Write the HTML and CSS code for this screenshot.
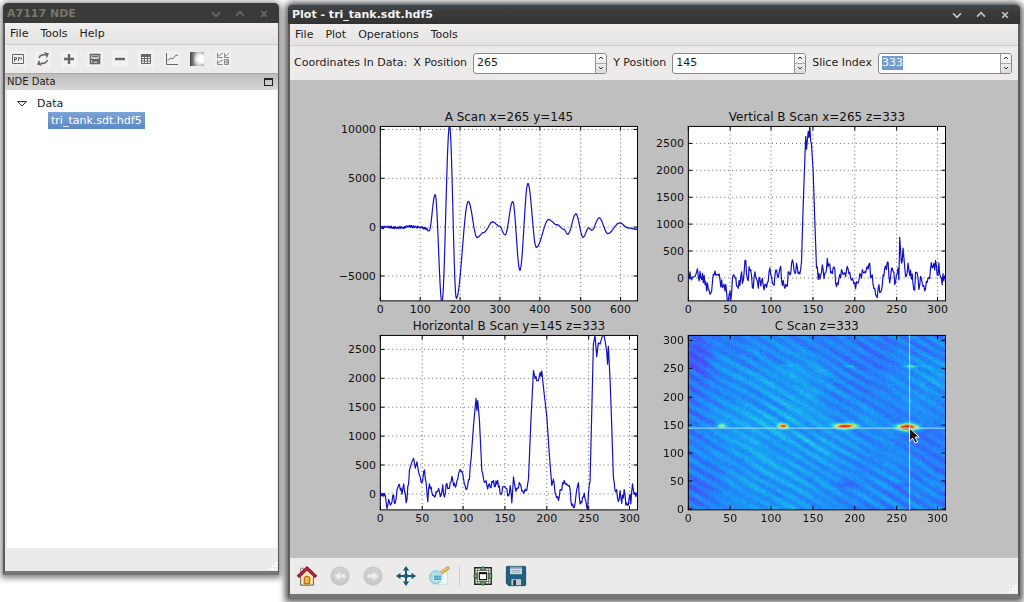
FILE: index.html
```html
<!DOCTYPE html>
<html lang="en">
<head>
<meta charset="utf-8">
<title>A7117 NDE</title>
<link rel="stylesheet" href="styles.css">
</head>
<body>
<main class="desktop">
  <section class="window window-data" aria-label="A7117 NDE">
    <header class="titlebar titlebar-idle">
      <h1 class="title">A7117 NDE</h1>
      <div class="window-buttons">
        <button class="window-button" aria-label="Minimize"><svg viewBox="0 0 9 9"><path d="M1 3l3.5 3.5L8 3"/></svg></button>
        <button class="window-button" aria-label="Maximize"><svg viewBox="0 0 9 9"><path d="M1 6l3.500-3.500L8 6"/></svg></button>
        <button class="window-button" aria-label="Close"><svg viewBox="0 0 9 9"><path d="M2 2l5 5M7 2l-5 5"/></svg></button>
      </div>
    </header>
    <nav class="menubar">
      <button class="menu">File</button>
      <button class="menu">Tools</button>
      <button class="menu">Help</button>
    </nav>
    <div class="data-tools" role="toolbar" aria-label="Data tools">
      <button class="tool" aria-label="Preview"><svg class="small-icon" viewBox="0 0 16 16"><path d="M2.500 3.500h11v9h-11zM4.500 10.500v-4h2v2h-2M8.500 10v-3.500h1.500v2M11.500 6.500v2"/></svg></button>
      <button class="tool" aria-label="Refresh"><svg class="small-icon icon-bold" viewBox="0 0 16 16"><path d="M4 7c1-3 4-4 6.500-3M12.500 9c-1 3-4 4-6.500 3"/><path class="solid" d="M9 1l5 1.500-2 4.500zM7 15l-5-1.500 2-4.500z"/></svg></button>
      <button class="tool" aria-label="Add"><svg class="small-icon icon-heavy" viewBox="0 0 16 16"><path d="M8 3v10M3 8h10"/></svg></button>
      <button class="tool" aria-label="Save"><svg class="small-icon icon-bold" viewBox="0 0 16 16"><path d="M3.500 3.500h9v9h-9zM4 8.500h8M5 5.500h6M6 12v-2h5v2"/></svg></button>
      <button class="tool" aria-label="Remove"><svg class="small-icon icon-heavy" viewBox="0 0 16 16"><path d="M3 8h10"/></svg></button>
      <button class="tool" aria-label="Table"><svg class="small-icon" viewBox="0 0 16 16"><path d="M3.500 4v8.500h9V4M3.500 7.500h9M3.500 10h9M6.500 5v7.500M9.500 5v7.500"/><path class="solid" d="M3 3h10v3H3z"/></svg></button>
      <button class="tool" aria-label="Line plot"><svg class="small-icon" viewBox="0 0 16 16"><path d="M2.500 2v11.500H14M3.500 10l3-3 2 1 3-3.500 2.500-.5"/></svg></button>
      <button class="tool" aria-label="Image plot"><span class="image-icon"></span></button>
      <button class="tool" aria-label="Multiple plots"><svg class="small-icon icon-light" viewBox="0 0 16 16"><path d="M2.500 2v4.500h5M9.500 2v4.500h4.500M2.500 9v4.500h5M3 5l2-1 3-2M10 5l2-1 2-2M3 12l2-1.500L8 9M9.500 8.500h4v5h-4zM10 11h3M12 9v4"/></svg></button>
    </div>
    <div class="dock-header">
      <h2 class="dock-title">NDE Data</h2>
      <button class="float-button" aria-label="Float panel"></button>
    </div>
    <ul class="tree">
      <li>
        <button class="tree-branch"><svg class="expander" viewBox="0 0 12 8"><path d="M1.500 1.500h9L6 6z"/></svg>Data</button>
        <ul class="tree-children">
          <li><button class="tree-leaf">tri_tank.sdt.hdf5</button></li>
        </ul>
      </li>
    </ul>
    <footer class="statusbar"><span class="grip"></span></footer>
  </section>

  <section class="window window-plot" aria-label="Plot - tri_tank.sdt.hdf5">
    <header class="titlebar">
      <h1 class="title">Plot - tri_tank.sdt.hdf5</h1>
      <div class="window-buttons">
        <button class="window-button" aria-label="Minimize"><svg viewBox="0 0 9 9"><path d="M1 3l3.500 3.500L8 3"/></svg></button>
        <button class="window-button" aria-label="Maximize"><svg viewBox="0 0 9 9"><path d="M1 6l3.500-3.500L8 6"/></svg></button>
        <button class="window-button" aria-label="Close"><svg viewBox="0 0 9 9"><path d="M2 2l5 5M7 2l-5 5"/></svg></button>
      </div>
    </header>
    <nav class="menubar">
      <button class="menu">File</button>
      <button class="menu">Plot</button>
      <button class="menu">Operations</button>
      <button class="menu">Tools</button>
    </nav>
    <form class="coordinates">
      <span class="legend">Coordinates In Data:</span>
      <label for="x-position">X Position</label>
      <span class="spin">
        <input id="x-position" class="spin-input" type="text" inputmode="numeric" value="265">
        <span class="steppers">
          <button class="stepper" type="button" aria-label="Increase X"><svg viewBox="0 0 8 6"><path d="M2 4l2-2 2 2"/></svg></button>
          <button class="stepper" type="button" aria-label="Decrease X"><svg viewBox="0 0 8 6"><path d="M2 2l2 2 2-2"/></svg></button>
        </span>
      </span>
      <label for="y-position">Y Position</label>
      <span class="spin">
        <input id="y-position" class="spin-input" type="text" inputmode="numeric" value="145">
        <span class="steppers">
          <button class="stepper" type="button" aria-label="Increase Y"><svg viewBox="0 0 8 6"><path d="M2 4l2-2 2 2"/></svg></button>
          <button class="stepper" type="button" aria-label="Decrease Y"><svg viewBox="0 0 8 6"><path d="M2 2l2 2 2-2"/></svg></button>
        </span>
      </span>
      <label for="slice-index">Slice Index</label>
      <span class="spin">
        <input id="slice-index" class="spin-input" type="text" inputmode="numeric" value="333">
        <span class="steppers">
          <button class="stepper" type="button" aria-label="Increase slice"><svg viewBox="0 0 8 6"><path d="M2 4l2-2 2 2"/></svg></button>
          <button class="stepper" type="button" aria-label="Decrease slice"><svg viewBox="0 0 8 6"><path d="M2 2l2 2 2-2"/></svg></button>
        </span>
      </span>
    </form>
    <div class="figure">
      <svg class="plot" id="a-scan" viewBox="0 0 309 210" role="img" aria-label="A Scan"></svg>
      <svg class="plot" id="vertical-b-scan" viewBox="0 0 309 210" role="img" aria-label="Vertical B Scan"></svg>
      <svg class="plot" id="horizontal-b-scan" viewBox="0 0 309 210" role="img" aria-label="Horizontal B Scan"></svg>
      <svg class="plot" id="c-scan" viewBox="0 0 309 210" role="img" aria-label="C Scan"></svg>
    </div>
    <footer class="plot-tools" role="toolbar" aria-label="Plot navigation">
      <button class="nav-tool" aria-label="Home"><svg class="nav-icon" viewBox="0 0 24 24">
        <path d="M5 12v10h14V12l-7-7z" fill="#fbe3b4" stroke="#555" />
        <path d="M5 3.500h3V9H5z" fill="#eee" stroke="#888"/>
        <path d="M2 13L12 3.500 22 13" fill="none" stroke="#86172b" stroke-width="3.600"/>
        <path d="M3 12.300L12 3.800l9 8.500" fill="none" stroke="#b92b43" stroke-width="1.500"/>
        <path d="M9 13.500q3-3 6 0v7H9z" fill="#f6b23a" stroke="#8a5a18"/>
      </svg></button>
      <button class="nav-tool" aria-label="Back"><svg class="nav-icon" viewBox="0 0 24 24">
        <circle cx="12" cy="12" r="10.500" fill="#c6c6c5"/><circle cx="12" cy="11" r="8.500" fill="#cfcfce"/>
        <path d="M6 12l6-5v3h6v4h-6v3z" fill="#ececeb"/>
      </svg></button>
      <button class="nav-tool" aria-label="Forward"><svg class="nav-icon" viewBox="0 0 24 24">
        <circle cx="12" cy="12" r="10.500" fill="#c6c6c5"/><circle cx="12" cy="11" r="8.500" fill="#cfcfce"/>
        <path d="M18 12l-6-5v3H6v4h6v3z" fill="#ececeb"/>
      </svg></button>
      <button class="nav-tool" aria-label="Pan"><svg class="nav-icon" viewBox="0 0 24 24">
        <path d="M12 4v16M4 12h16" stroke="#1d5a74" stroke-width="2.200"/>
        <path d="M12 1l3.500 5h-7zM12 23l3.500-5h-7zM1 12l5-3.500v7zM23 12l-5-3.500v7z" fill="#1d5a74"/>
        <circle cx="12" cy="12" r="2.500" fill="#1d5a74"/>
      </svg></button>
      <button class="nav-tool" aria-label="Zoom to rectangle"><svg class="nav-icon" viewBox="0 0 24 24">
        <path d="M6 6h15v15H6z" fill="#f4fafa" stroke="#b9dfe2"/>
        <path d="M14 9L21.500 3.500" stroke="#d9a24d" stroke-width="4" stroke-linecap="round"/>
        <path d="M14 8.500L21 3.300" stroke="#f2c77f" stroke-width="1.200" stroke-linecap="round"/>
        <circle cx="8.500" cy="13.500" r="7" fill="#a8dbe2" stroke="#8cc3cc"/>
        <path d="M6 10h9v7H6z" fill="#4fa3c4" stroke="#dff3f6"/>
        <path d="M6 11.500h9M7 14h7" stroke="#9bd2e0"/>
      </svg></button>
      <span class="separator"></span>
      <button class="nav-tool" aria-label="Configure subplots"><svg class="nav-icon" viewBox="0 0 24 24">
        <path d="M3 3h18v18H3z" fill="#e9efe7" stroke="#222" stroke-width="1.500"/>
        <path d="M3 6h18M6 3v18M18 3v18M3 18h18" stroke="#777"/>
        <path d="M8 8.500h8v7.500H8z" fill="#fff" stroke="#111" stroke-width="1.200"/>
        <path d="M8 9h8" stroke="#111" stroke-width="2"/>
        <path d="M12 1.500l3.500 4h-7zM12 22.500l3.500-4h-7zM1.500 12l4-3.500v7zM22.500 12l-4-3.500v7z" fill="#6fb069" stroke="#1e4b1d" stroke-width=".8"/>
      </svg></button>
      <button class="nav-tool" aria-label="Save figure"><svg class="nav-icon" viewBox="0 0 24 24">
        <path d="M1.500 2.500q0-1 1-1h19q1 0 1 1v19q0 1-1 1H4l-2.500-2.500z" fill="#1f617f" stroke="#174a62"/>
        <path d="M5.500 2h13v8h-13z" fill="#d5dce2"/>
        <path d="M5.500 2h13v2h-13z" fill="#7b9db8"/>
        <path d="M7 6h10M7 8h10" stroke="#8b98a3" stroke-width=".8"/>
        <path d="M7 15.500h10.500V22H7z" fill="#c3cbd1"/>
        <path d="M9 16.500h3V22H9z" fill="#173c50"/>
      </svg></button>
      <span class="grip"></span>
    </footer>
  </section>
</main>
<script src="plots.js"></script>
</body>
</html>
```
FILE: styles.css
```css
* {
  box-sizing: border-box;
}

body {
  margin: 0;
  background: #fff;
  color: #1c1c1c;
  font-family: "DejaVu Sans", sans-serif;
  font-size: 11px;
  line-height: 14px;
}

button,
input {
  margin: 0;
  padding: 0;
  border: 0;
  background: none;
  color: inherit;
  font: inherit;
}

h1,
h2,
ul {
  margin: 0;
  padding: 0;
  font-size: inherit;
  list-style: none;
}

svg {
  display: block;
}

.desktop {
  display: flex;
  gap: 9px;
  min-height: 100vh;
  padding: 3px 4px 4px 3px;
}

.window {
  display: flex;
  flex-direction: column;
  border: solid #5c5c5b;
  border-width: 0 1px 4px 2px;
  border-bottom-color: #777775;
  border-radius: 5px 5px 0 0;
  background: #ecebea;
  box-shadow: 0 1px 6px 2px rgba(0, 0, 0, 0.5);
}

.window-data {
  flex: 0 0 276px;
  margin-bottom: 23px;
}

.window-plot {
  flex: 1;
  min-width: 0;
  border-right-width: 2px;
  margin-top: 1px;
  box-shadow: 0 1px 6px 3px rgba(0, 0, 0, 0.65);
}

.titlebar {
  display: flex;
  align-items: center;
  justify-content: space-between;
  height: 20px;
  margin-left: -2px;
  margin-right: -2px;
  padding: 0 9px 0 4px;
  border-top: 1px solid #68747d;
  border-radius: 5px 5px 0 0;
  background: linear-gradient(#40474c, #3a3a3a 40%, #333);
  color: #f4f4f4;
}

.window-data .titlebar {
  margin-right: -1px;
}

.titlebar-idle {
  border-top-color: #3a3a39;
  background: #3a3a39;
  color: #77766a;
}

.title {
  font-weight: bold;
}

.window-buttons {
  display: flex;
  gap: 12px;
}

.window-button {
  width: 12px;
  height: 12px;
  padding: 1px;
}

.window-button path {
  fill: none;
  stroke: #c8c8c8;
  stroke-width: 1.5;
}

.titlebar-idle path {
  stroke: #6b6b67;
}

.menubar {
  display: flex;
  align-items: center;
  gap: 12px;
  height: 22px;
  padding: 0 5px;
  border-bottom: 1px solid #cfcecc;
  background: linear-gradient(#efeeed, #e4e3e1);
}

.data-tools {
  display: grid;
  grid-template-columns: repeat(9, 1fr);
  width: 231px;
  height: 28px;
}

.tool {
  display: grid;
  place-items: center;
}

.small-icon {
  width: 16px;
  height: 16px;
  background: #f1f1f1;
  fill: none;
  stroke: #666;
}

.icon-bold {
  stroke-width: 1.6;
}

.icon-heavy {
  stroke-width: 2.4;
}

.icon-light {
  stroke: #8a8a8a;
}

.solid {
  fill: #666;
  stroke: none;
}

.image-icon {
  width: 14px;
  height: 14px;
  background:
    radial-gradient(circle at 80% 50%, #fff 0 25%, rgba(255, 255, 255, 0) 65%),
    linear-gradient(90deg, #444, #bbb 50%, #888);
}

.dock-header {
  display: flex;
  align-items: center;
  justify-content: space-between;
  height: 17px;
  padding: 0 5px 0 2px;
  border-top: 1px solid #aaa9a8;
  background: linear-gradient(#bdbcbb, #d9d8d7);
}

.dock-title {
  font-size: 10px;
  font-weight: normal;
}

.float-button {
  width: 9px;
  height: 8px;
  border: 1px solid #222;
  border-top-width: 2px;
}

.tree {
  flex: 1;
  margin: 0 1px 0 2px;
  padding: 6px 9px;
  background: #fff;
}

.tree-branch {
  display: flex;
  align-items: center;
  gap: 9px;
  height: 16px;
}

.expander {
  width: 12px;
  height: 8px;
  fill: none;
  stroke: #333;
}

.tree-children {
  padding-left: 32px;
}

.tree-leaf {
  height: 17px;
  padding: 0 3px;
  background: linear-gradient(#7ba3d6, #5a88c4);
  color: #fff;
}

.statusbar {
  display: flex;
  justify-content: flex-end;
  align-items: flex-end;
  height: 23px;
}

.grip {
  width: 12px;
  height: 12px;
  background: radial-gradient(circle at 1px 1px, #fff 1px, transparent 1px) 0 0 / 3px 3px;
  clip-path: polygon(100% 0, 100% 100%, 0 100%);
}

.coordinates {
  display: flex;
  align-items: center;
  gap: 6px;
  height: 34px;
  padding: 0 6px 0 4px;
  white-space: nowrap;
}

.spin {
  display: flex;
  flex: 1;
  min-width: 0;
  height: 21px;
  border: 1px solid #888785;
  border-radius: 3px;
  background: #fff;
  overflow: hidden;
}

.spin-input {
  flex: 1;
  width: 0;
  min-width: 0;
  padding: 0 3px;
  outline: 0;
}

.spin-input::selection {
  background: #6f9bd1;
  color: #fff;
}

.steppers {
  display: flex;
  flex-direction: column;
  width: 11px;
  border-left: 1px solid #999;
  background: linear-gradient(#fafafa, #dedddc);
}

.stepper {
  display: grid;
  flex: 1;
  place-items: center;
}

.stepper + .stepper {
  border-top: 1px solid #aaa;
}

.stepper svg {
  width: 8px;
  height: 6px;
  fill: none;
  stroke: #333;
}

.figure {
  display: grid;
  grid-template-columns: 1fr 1fr;
  flex: 1;
  align-content: start;
  padding: 27px 71px 30px 41px;
  background: #bfbfbf;
}

.plot {
  width: 100%;
  height: auto;
  overflow: visible;
  font-size: 11px;
  fill: #111;
}

.plot-title {
  font-size: 12px;
  text-anchor: middle;
}

.x-tick {
  text-anchor: middle;
}

.y-tick {
  text-anchor: end;
}

.axes-face {
  fill: #fff;
}

.axes-frame {
  fill: none;
  stroke: #000;
}

.gridline {
  stroke: #666;
  stroke-dasharray: 1 3;
}

.tick {
  stroke: #000;
}

.trace {
  fill: none;
  stroke: #1010c4;
  stroke-width: 1.2;
  stroke-linejoin: round;
}

.crosshair {
  stroke: #a5e2f2;
}

.pointer {
  fill: #111;
  stroke: #fff;
}

.scan-image {
  display: block;
}

.plot-tools {
  display: flex;
  align-items: center;
  height: 36px;
}

.nav-tool {
  display: grid;
  place-items: center;
  width: 33px;
  height: 33px;
}

.nav-icon {
  width: 22px;
  height: 22px;
}

.separator {
  width: 1px;
  height: 20px;
  margin: 0 6px 0 4px;
  background: #cfcecc;
}

.plot-tools .grip {
  align-self: flex-end;
  margin-left: auto;
}
```
FILE: plots.js
```js
const SVG_NS = 'http://www.w3.org/2000/svg';
const AXES = { left: 49.5, top: 19.5, width: 258, height: 175 };

function makeRandom(seed) {
  let state = seed;
  return () => {
    state = (state * 1664525 + 1013904223) % 4294967296;
    return state / 4294967296;
  };
}

function add(parent, name, attributes, text) {
  const node = document.createElementNS(SVG_NS, name);
  for (const key in attributes) node.setAttribute(key, attributes[key]);
  if (text !== undefined) node.textContent = text;
  parent.appendChild(node);
  return node;
}

function makeScales(plot) {
  const [y0, y1] = plot.yRange;
  return {
    x: value => AXES.left + value / plot.xMax * AXES.width,
    y: value => AXES.top + (y1 - value) / (y1 - y0) * AXES.height
  };
}

function drawAxes(svg, plot, scale) {
  const right = AXES.left + AXES.width;
  const bottom = AXES.top + AXES.height;
  const snap = value => Math.floor(value) + 0.5;
  for (const value of plot.xTicks) {
    const x = snap(scale.x(value));
    if (plot.grid) add(svg, 'line', { class: 'gridline', x1: x, x2: x, y1: AXES.top, y2: bottom });
    add(svg, 'path', { class: 'tick', d: `M${x} ${bottom}v-4M${x} ${AXES.top}v4` });
    add(svg, 'text', { class: 'x-tick', x, y: 207 }, value);
  }
  for (const value of plot.yTicks) {
    const y = snap(scale.y(value));
    if (plot.grid) add(svg, 'line', { class: 'gridline', x1: AXES.left, x2: right, y1: y, y2: y });
    add(svg, 'path', { class: 'tick', d: `M${AXES.left} ${y}h4M${right} ${y}h-4` });
    add(svg, 'text', { class: 'y-tick', x: 45, y: y + 4 }, String(value).replace('-', '\u2212'));
  }
  add(svg, 'rect', { class: 'axes-frame', x: AXES.left, y: AXES.top, width: AXES.width, height: AXES.height });
  add(svg, 'text', { class: 'plot-title', x: AXES.left + AXES.width / 2, y: 14 }, plot.title);
}

function drawLinePlot(id, plot) {
  const svg = document.getElementById(id);
  const scale = makeScales(plot);
  add(svg, 'rect', { class: 'axes-face', x: AXES.left, y: AXES.top, width: AXES.width, height: AXES.height });
  const clip = add(svg, 'clipPath', { id: id + '-clip' });
  add(clip, 'rect', { x: AXES.left, y: AXES.top, width: AXES.width, height: AXES.height });
  drawAxes(svg, plot, scale);
  const points = plot.samples.map(([x, y]) => `${scale.x(x).toFixed(2)},${scale.y(y).toFixed(2)}`);
  add(svg, 'polyline', { class: 'trace', points: points.join(' '), 'clip-path': `url(#${id}-clip)` });
}

/* Half-cosine steps between the turning points of a smooth wave. */
function smoothWave(knots) {
  const random = makeRandom(7);
  const samples = [];
  for (let i = 0; i + 1 < knots.length; i++) {
    const [x0, y0] = knots[i];
    const [x1, y1] = knots[i + 1];
    for (let x = x0; x < x1; x++) {
      const t = (1 - Math.cos(Math.PI * (x - x0) / (x1 - x0))) / 2;
      samples.push([x, y0 + (y1 - y0) * t + (random() - 0.5) * (x < 118 ? 260 : 50)]);
    }
  }
  samples.push(knots[knots.length - 1]);
  return samples;
}

/* Linear steps with measurement noise near the baseline. */
function noisyTrace(knots, amplitude, seed) {
  const random = makeRandom(seed);
  const samples = [];
  for (let i = 0; i + 1 < knots.length; i++) {
    const [x0, y0] = knots[i];
    const [x1, y1] = knots[i + 1];
    samples.push(knots[i]);
    for (let x = x0 + 1; x < x1; x++) {
      const y = y0 + (y1 - y0) * (x - x0) / (x1 - x0);
      const noise = Math.abs(y) < 450 && Math.abs(y1 - y0) < 500 ? amplitude : 0;
      samples.push([x, y + (random() - 0.5) * noise]);
    }
  }
  samples.push(knots[knots.length - 1]);
  return samples;
}

drawLinePlot('a-scan', {
  title: 'A Scan x=265 y=145',
  xMax: 643, yRange: [-7530, 10293], grid: true,
  xTicks: [0, 100, 200, 300, 400, 500, 600],
  yTicks: [-5000, 0, 5000, 10000],
  samples: smoothWave([
    [0, -50], [20, 10], [45, -60], [75, 60], [100, 0], [112, -120], [122, -400], [137, 3340],
    [154, -7700], [173, 10400], [190, -7260], [220, 2620], [242, -1060], [258, -550], [281, 540],
    [298, 100], [312, -800], [331, 2620], [349, -4400], [369, 4460], [390, -2050], [421, 780],
    [442, 240], [458, -200], [469, -720], [489, 1360], [507, -1020], [521, -80], [529, -310],
    [547, 950], [569, -650], [598, 440], [620, -80], [643, -220]
  ])
});

drawLinePlot('vertical-b-scan', {
  title: 'Vertical B Scan x=265 z=333',
  xMax: 309, yRange: [-422, 2823], grid: true,
  xTicks: [0, 50, 100, 150, 200, 250, 300],
  yTicks: [0, 500, 1000, 1500, 2000, 2500],
  samples: noisyTrace([
    [0, 0], [2, 120], [5, 20], [10, 120], [12, 20], [17, 90], [20, -120], [26, -300], [30, 70],
    [36, 50], [42, -150], [45, -120], [48, -430], [50, -240], [51, -410], [54, 60], [60, -190],
    [64, 120], [66, -40], [69, 330], [71, -20], [74, 140], [78, -190], [80, 120], [83, -60],
    [88, -40], [94, -170], [97, 120], [101, -90], [104, 40], [110, 180], [115, -140], [122, 60],
    [126, 290], [128, 90], [131, 190], [134, 80], [136, 310], [138, 1360], [141, 2640],
    [142, 2400], [144, 2730], [145, 2620], [146, 2823], [147, 2560], [148, 2480], [150, 1985],
    [152, 1050], [154, 190], [158, -20], [161, 250], [163, -10], [167, 370], [172, 120],
    [175, 210], [177, -90], [181, 0], [185, 120], [190, 150], [194, 110], [198, -40], [204, -90],
    [208, 0], [212, 120], [217, 260], [220, 30], [224, -190], [231, -260], [234, 60], [239, 300],
    [242, -90], [245, 190], [248, -120], [252, 190], [253, -30], [254, 760], [256, 280],
    [258, 560], [261, 30], [264, 280], [267, 150], [271, -220], [274, 110], [277, -210],
    [280, 0], [283, -140], [288, 0], [293, 190], [297, 330], [299, 60], [301, 280], [304, 10], [309, 10]
  ], 280, 21)
});

drawLinePlot('horizontal-b-scan', {
  title: 'Horizontal B Scan y=145 z=333',
  xMax: 309, yRange: [-272, 2749], grid: true,
  xTicks: [0, 50, 100, 150, 200, 250, 300],
  yTicks: [0, 500, 1000, 1500, 2000, 2500],
  samples: noisyTrace([
    [0, 50], [2, -30], [5, 10], [8, -250], [10, -90], [12, -190], [15, -20], [18, -150], [20, 80],
    [23, 170], [26, 0], [28, 180], [31, -150], [34, 180], [35, 420], [38, 560], [40, 620],
    [42, 450], [44, 560], [46, 380], [50, 200], [53, 420], [55, 200], [57, -130], [59, 180],
    [62, 20], [66, -40], [70, 100], [72, -40], [75, 160], [77, -50], [79, 170], [82, 100],
    [86, 310], [90, 120], [92, 230], [95, 400], [98, 400], [100, 260], [104, 90], [107, 250],
    [109, 600], [112, 1200], [115, 1660], [116, 1450], [117, 1620], [119, 1300], [122, 400],
    [124, 260], [128, 150], [132, 120], [134, 220], [138, 130], [141, 240], [144, 0], [148, 130],
    [151, 100], [154, -30], [156, 150], [158, -150], [160, 300], [163, 50], [167, 200], [171, 60],
    [176, 70], [178, 260], [181, 1300], [184, 2140], [186, 2000], [187, 2040], [188, 1960],
    [190, 1970], [192, 2110], [193, 2040], [194, 2130], [196, 1850], [200, 1350], [203, 700],
    [206, 150], [208, 260], [210, 20], [214, -110], [216, 80], [220, 180], [224, 180], [227, 150],
    [230, -200], [234, -160], [238, 200], [240, -170], [243, -50], [245, 20], [247, -120],
    [249, -280], [250, 0], [252, 220], [254, 1400], [256, 2600], [258, 2749], [260, 2380],
    [262, 2620], [264, 2600], [267, 2749], [269, 2740], [272, 2480], [273, 2250], [274, 2560],
    [276, 2000], [278, 1200], [280, 300], [282, 60], [284, 80], [286, -130], [288, 60],
    [290, -160], [293, 80], [295, -190], [297, -190], [300, 0], [301, -170], [303, 180],
    [305, 0], [309, 0]
  ], 130, 5)
});

/* Amplitude to colour stops for the C scan. */
const COLOUR_STOPS = [
  [0.0, 84, 66, 246], [0.25, 56, 98, 250], [0.5, 32, 136, 250], [0.75, 24, 165, 242],
  [1.0, 30, 205, 230], [1.4, 140, 240, 160], [1.8, 244, 226, 80], [2.3, 226, 70, 30], [3.5, 190, 30, 20]
];

function colourFor(value) {
  for (let i = 1; i < COLOUR_STOPS.length; i++) {
    const a = COLOUR_STOPS[i - 1];
    const b = COLOUR_STOPS[i];
    if (value <= b[0] || i === COLOUR_STOPS.length - 1) {
      const t = Math.max(0, Math.min(1, (value - a[0]) / (b[0] - a[0])));
      return [1, 2, 3].map(k => a[k] + (b[k] - a[k]) * t);
    }
  }
}

function lattice(x, y) {
  const s = Math.sin(x * 127.1 + y * 311.7) * 43758.5453;
  return s - Math.floor(s);
}

function valueNoise(x, y) {
  const xi = Math.floor(x), yi = Math.floor(y);
  const u = x - xi, v = y - yi;
  const su = u * u * (3 - 2 * u), sv = v * v * (3 - 2 * v);
  const top = lattice(xi, yi) * (1 - su) + lattice(xi + 1, yi) * su;
  const low = lattice(xi, yi + 1) * (1 - su) + lattice(xi + 1, yi + 1) * su;
  return top * (1 - sv) + low * sv;
}

/* Echoes: centre x, centre y, horizontal radius, vertical radius, strength. */
const ECHOES = [
  [33, 91, 5, 2.4, 0.95], [95, 91, 5, 2.6, 1.7], [158, 91, 10, 2.7, 2.3], [220, 92, 10, 3.4, 2.6],
  [224, 31, 9, 1.2, 0.6], [160, 31, 7, 1, 0.35], [98, 30, 7, 1, 0.25],
  [158, 150, 9, 3, -0.3], [217, 150, 7, 3, -0.25], [12, 153, 24, 16, -0.25], [10, 22, 14, 26, -0.25]
];

function paintScan(canvas) {
  const context = canvas.getContext('2d');
  const image = context.createImageData(canvas.width, canvas.height);
  const random = makeRandom(99);
  for (let y = 0; y < canvas.height; y++) {
    for (let x = 0; x < canvas.width; x++) {
      const along = x * 0.86 + y * 0.51;
      const across = -x * 0.51 + y * 0.86;
      const wobble = 3 * valueNoise(x / 35, y / 35);
      let value = 0.5;
      value += 0.13 * Math.sin((across + wobble) * 0.66) * (0.4 + valueNoise(x / 40 + 9, y / 40));
      value += 0.24 * (valueNoise(along / 22, across / 5) - 0.5);
      value += 0.2 * (valueNoise(x / 60 + 3, y / 50 + 5) - 0.5);
      value += 0.32 * (random() - 0.5);
      value += 0.12 * Math.exp(-((x - 85) ** 2) / 3600) - 0.1 * Math.exp(-x / 12);
      for (const [cx, cy, rx, ry, strength] of ECHOES) {
        value += strength * Math.exp(-(((x - cx) / rx) ** 2) - ((y - cy) / ry) ** 2);
      }
      const [r, g, b] = colourFor(value);
      const offset = (y * canvas.width + x) * 4;
      image.data[offset] = r;
      image.data[offset + 1] = g;
      image.data[offset + 2] = b;
      image.data[offset + 3] = 255;
    }
  }
  context.putImageData(image, 0, 0);
}

function drawScanPlot(id, plot) {
  const svg = document.getElementById(id);
  const scale = makeScales(plot);
  const holder = add(svg, 'foreignObject', {
    x: 49, y: 19, width: AXES.width, height: AXES.height
  });
  const canvas = document.createElement('canvas');
  canvas.className = 'scan-image';
  canvas.width = AXES.width;
  canvas.height = AXES.height;
  paintScan(canvas);
  holder.appendChild(canvas);
  drawAxes(svg, plot, scale);
  const x = Math.floor(scale.x(plot.cursor[0])) + 0.5;
  const y = Math.floor(scale.y(plot.cursor[1])) + 0.5;
  add(svg, 'path', {
    class: 'crosshair',
    d: `M${x} ${AXES.top}v${AXES.height}M${AXES.left} ${y}h${AXES.width}`
  });
  add(svg, 'path', { class: 'pointer', d: `M${x} ${y}v13l3-3 2.500 5 2.500-1-2.500-5h4z` });
}

drawScanPlot('c-scan', {
  title: 'C Scan z=333',
  xMax: 309, yRange: [-1, 309], grid: false,
  xTicks: [0, 50, 100, 150, 200, 250, 300],
  yTicks: [0, 50, 100, 150, 200, 250, 300],
  cursor: [266, 145]
});

const sliceInput = document.getElementById('slice-index');
sliceInput.focus();
sliceInput.select();
```
